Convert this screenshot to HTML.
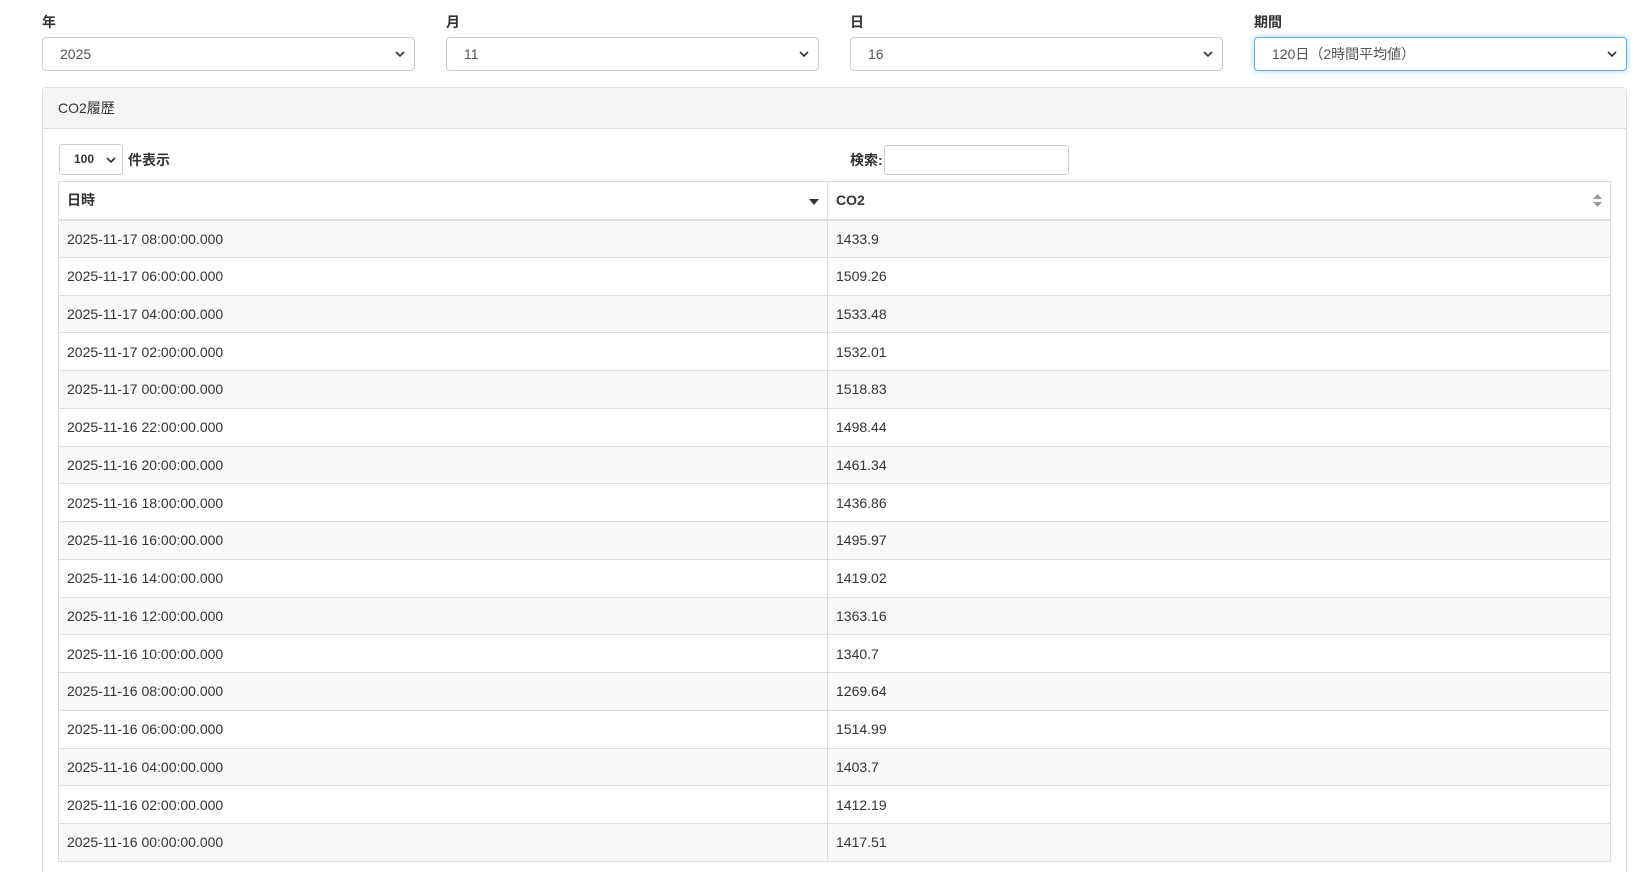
<!DOCTYPE html>
<html><head><meta charset="utf-8"><style>
*{box-sizing:border-box;margin:0;padding:0}
html{overflow:hidden;height:872px}
body{width:1650px;height:872px;overflow:hidden;background:#fff;font-family:"Liberation Sans","Noto Sans CJK JP",sans-serif;font-size:14px;color:#333;position:relative}
.lbl{position:absolute;top:12px;font-weight:bold;font-size:14px}
.sel{position:absolute;top:37px;width:373px;height:34px;border:1px solid #ccc;border-radius:4px;padding-left:17px;line-height:32px;color:#555;font-size:14px}
.sel svg{position:absolute;right:9px;top:13px}
.sel.f{border-color:#66afe9;box-shadow:0 0 6px rgba(102,175,233,.6)}
.card{position:absolute;left:42px;top:87px;width:1585px;height:790px;border:1px solid #ddd;border-radius:4px}
.ch{height:41px;background:#f5f5f5;border-bottom:1px solid #ddd;padding-left:15px;line-height:40px;font-size:14px}
table{position:absolute;left:15px;top:93px;width:1553px;border-collapse:collapse}
th,td{border:1px solid #ddd;text-align:left;padding:0 8px;height:37.75px}
th{height:38px;border-bottom:2px solid #ddd;font-weight:bold;position:relative}
tr:nth-child(even) td{background:#f9f9f9}
</style></head><body>
<div class="lbl" style="left:42px">年</div>
<div class="lbl" style="left:446px">月</div>
<div class="lbl" style="left:850px">日</div>
<div class="lbl" style="left:1254px">期間</div>
<div class="sel" style="left:42px">2025<svg width="10" height="7"><path d="M1 1l4 4 4-4" stroke="#333" stroke-width="1.6" fill="none"/></svg></div>
<div class="sel" style="left:446px">11<svg width="10" height="7"><path d="M1 1l4 4 4-4" stroke="#333" stroke-width="1.6" fill="none"/></svg></div>
<div class="sel" style="left:850px">16<svg width="10" height="7"><path d="M1 1l4 4 4-4" stroke="#333" stroke-width="1.6" fill="none"/></svg></div>
<div class="sel f" style="left:1254px">120日（2時間平均値）<svg width="10" height="7"><path d="M1 1l4 4 4-4" stroke="#333" stroke-width="1.6" fill="none"/></svg></div>
<div class="card">
<div class="ch">CO2履歴</div>
<div style="position:absolute;left:16px;top:56px;width:64px;height:31px;border:1px solid #ccc;border-radius:3px;font-size:12px;font-weight:bold;line-height:29px;padding-left:14px">100<svg style="position:absolute;right:6px;top:12px" width="10" height="7"><path d="M1 1l4 4 4-4" stroke="#333" stroke-width="1.6" fill="none"/></svg></div>
<div style="position:absolute;left:85px;top:62px;font-weight:bold">件表示</div>
<div style="position:absolute;left:807px;top:62px;font-weight:bold">検索:</div>
<div style="position:absolute;left:841px;top:57px;width:185px;height:30px;border:1px solid #ccc;border-radius:3px"></div>
<table>
<tr><th style="width:769px">日時<svg style="position:absolute;right:8px;top:17px" width="10" height="6"><path d="M0 0h10L5 6z" fill="#333"/></svg></th><th>CO2<svg style="position:absolute;right:8px;top:12px" width="9" height="13"><path d="M0 5h9L4.5 0zM0 8h9L4.5 13z" fill="#999"/></svg></th></tr>
<tr><td>2025-11-17 08:00:00.000</td><td>1433.9</td></tr>
<tr><td>2025-11-17 06:00:00.000</td><td>1509.26</td></tr>
<tr><td>2025-11-17 04:00:00.000</td><td>1533.48</td></tr>
<tr><td>2025-11-17 02:00:00.000</td><td>1532.01</td></tr>
<tr><td>2025-11-17 00:00:00.000</td><td>1518.83</td></tr>
<tr><td>2025-11-16 22:00:00.000</td><td>1498.44</td></tr>
<tr><td>2025-11-16 20:00:00.000</td><td>1461.34</td></tr>
<tr><td>2025-11-16 18:00:00.000</td><td>1436.86</td></tr>
<tr><td>2025-11-16 16:00:00.000</td><td>1495.97</td></tr>
<tr><td>2025-11-16 14:00:00.000</td><td>1419.02</td></tr>
<tr><td>2025-11-16 12:00:00.000</td><td>1363.16</td></tr>
<tr><td>2025-11-16 10:00:00.000</td><td>1340.7</td></tr>
<tr><td>2025-11-16 08:00:00.000</td><td>1269.64</td></tr>
<tr><td>2025-11-16 06:00:00.000</td><td>1514.99</td></tr>
<tr><td>2025-11-16 04:00:00.000</td><td>1403.7</td></tr>
<tr><td>2025-11-16 02:00:00.000</td><td>1412.19</td></tr>
<tr><td>2025-11-16 00:00:00.000</td><td>1417.51</td></tr>
</table>
</div>
</body></html>
